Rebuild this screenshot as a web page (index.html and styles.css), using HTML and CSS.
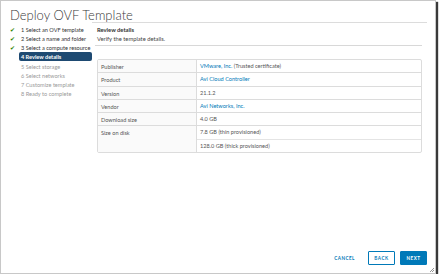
FILE: index.html
```html
<!DOCTYPE html>
<html lang="en">
<head>
    <meta charset="UTF-8">
    <title>Deploy OVF Template</title>
    <link rel="stylesheet" href="styles.css">
</head>
<body>

    <div class="dialog">
        <div class="dialog-header">
            <h2>Deploy OVF Template</h2>
        </div>

        <div class="dialog-body">
            <ul class="steps">
                <li class="step done"><span class="check">&#10004;</span><span class="step-label">1 Select an OVF template</span></li>
                <li class="step done"><span class="check">&#10004;</span><span class="step-label">2 Select a name and folder</span></li>
                <li class="step done"><span class="check">&#10004;</span><span class="step-label">3 Select a compute resource</span></li>
                <li class="step active"><span class="check"></span><span class="step-label">4 Review details</span></li>
                <li class="step"><span class="check"></span><span class="step-label">5 Select storage</span></li>
                <li class="step"><span class="check"></span><span class="step-label">6 Select networks</span></li>
                <li class="step"><span class="check"></span><span class="step-label">7 Customize template</span></li>
                <li class="step"><span class="check"></span><span class="step-label">8 Ready to complete</span></li>
            </ul>

            <div class="content">
                <div class="content-header">
                    <div class="content-title">Review details</div>
                    <div class="content-sub">Verify the template details.</div>
                </div>

                <div class="details">
                    <div class="row">
                        <div class="label">Publisher</div>
                        <div class="value"><a>VMware, Inc.</a> (Trusted certificate)</div>
                    </div>
                    <div class="row">
                        <div class="label">Product</div>
                        <div class="value"><a>Avi Cloud Controller</a></div>
                    </div>
                    <div class="row">
                        <div class="label">Version</div>
                        <div class="value">21.1.2</div>
                    </div>
                    <div class="row">
                        <div class="label">Vendor</div>
                        <div class="value"><a>Avi Networks, Inc.</a></div>
                    </div>
                    <div class="row">
                        <div class="label">Download size</div>
                        <div class="value">4.0 GB</div>
                    </div>
                    <div class="row">
                        <div class="label">Size on disk</div>
                        <div class="values">
                            <div class="value">7.8 GB (thin provisioned)</div>
                            <div class="value">128.0 GB (thick provisioned)</div>
                        </div>
                    </div>
                </div>
            </div>
        </div>

        <div class="dialog-footer">
            <button class="btn btn-link">CANCEL</button>
            <button class="btn btn-outline">BACK</button>
            <button class="btn btn-primary">NEXT</button>
        </div>

        <svg class="grip" width="5" height="5" viewBox="0 0 5 5">
            <path d="M1 5 L5 1 M3 5 L5 3" stroke="#777" stroke-width="0.8"/>
        </svg>
    </div>

</body>
</html>
```

FILE: styles.css
```css
body {
    margin: 0;
    background: white;
    font-family: Lato, "Noto Sans", sans-serif;
}

.dialog {
    position: relative;
    box-sizing: border-box;
    width: 436px;
    height: 274px;
    border: 1px solid #c8c8c8;
    box-shadow: 2px 2px 1px #3a3a3a;
    background: white;
    display: flex;
    flex-direction: column;
}

.dialog-header {
    height: 21px;
    padding-left: 9px;
}

h2 {
    margin: 0;
    padding-top: 7px;
    font-size: 13px;
    font-weight: 300;
    line-height: 15px;
    color: #3a3a3a;
}

.dialog-body {
    flex: 1;
    display: flex;
}

.steps {
    list-style: none;
    margin: 0;
    padding: 3px 0 0 9px;
    width: 82px;
}

.step {
    display: flex;
    height: 9.15px;
    align-items: center;
    font-size: 5.6px;
    color: #9a9a9a;
}

.step.done {
    color: #333;
}

.check {
    width: 9px;
    font-size: 5.5px;
    color: #2f8400;
}

.step-label {
    flex: 1;
    padding-left: 2px;
    line-height: 9px;
}

.step.active .step-label {
    background: #1e4a72;
    color: white;
    font-weight: bold;
    border-radius: 2px;
}

.content {
    flex: 1;
    padding: 0 5px 0 3px;
    border-top: 1px solid #dcdcdc;
    margin-right: 8px;
}

.content-header {
    padding: 3px 0 2px 2px;
    border-bottom: 1px solid #d8d8d8;
    font-size: 5.8px;
    line-height: 8.5px;
    color: #444;
}

.content-title {
    font-weight: bold;
    color: #333;
}

.details {
    margin: 13px 0 0 2px;
    border: 1px solid #dcdcdc;
    border-radius: 2px;
    font-size: 5.6px;
    color: #565656;
}

.row {
    display: flex;
    border-top: 1px solid #dcdcdc;
}

.row:first-child {
    border-top: none;
}

.label {
    width: 95px;
    padding: 3px 0 0 3px;
    background: #fafafa;
    border-right: 1px solid #dcdcdc;
}

.values {
    flex: 1;
}

.value {
    flex: 1;
    height: 12.3px;
    line-height: 12.3px;
    padding-left: 3px;
}

.values .value + .value {
    border-top: 1px solid #e4e4e4;
}

.value a {
    color: #0079b8;
}

.dialog-footer {
    display: flex;
    justify-content: flex-end;
    align-items: center;
    gap: 5px;
    padding: 0 8px 8px 0;
}

.btn {
    height: 14px;
    padding: 0 5px;
    min-width: 27px;
    font-family: Lato, "Noto Sans", sans-serif;
    font-size: 4.6px;
    font-weight: bold;
    letter-spacing: 0.5px;
    border-radius: 1px;
    border: 1px solid #0079b8;
    cursor: pointer;
}

.btn-link {
    border-color: transparent;
    background: none;
    color: #0079b8;
    margin-right: 2px;
}

.btn-outline {
    background: white;
    color: #0079b8;
}

.btn-primary {
    background: #0079b8;
    color: white;
}

.grip {
    position: absolute;
    right: 1px;
    bottom: 1px;
}
```
